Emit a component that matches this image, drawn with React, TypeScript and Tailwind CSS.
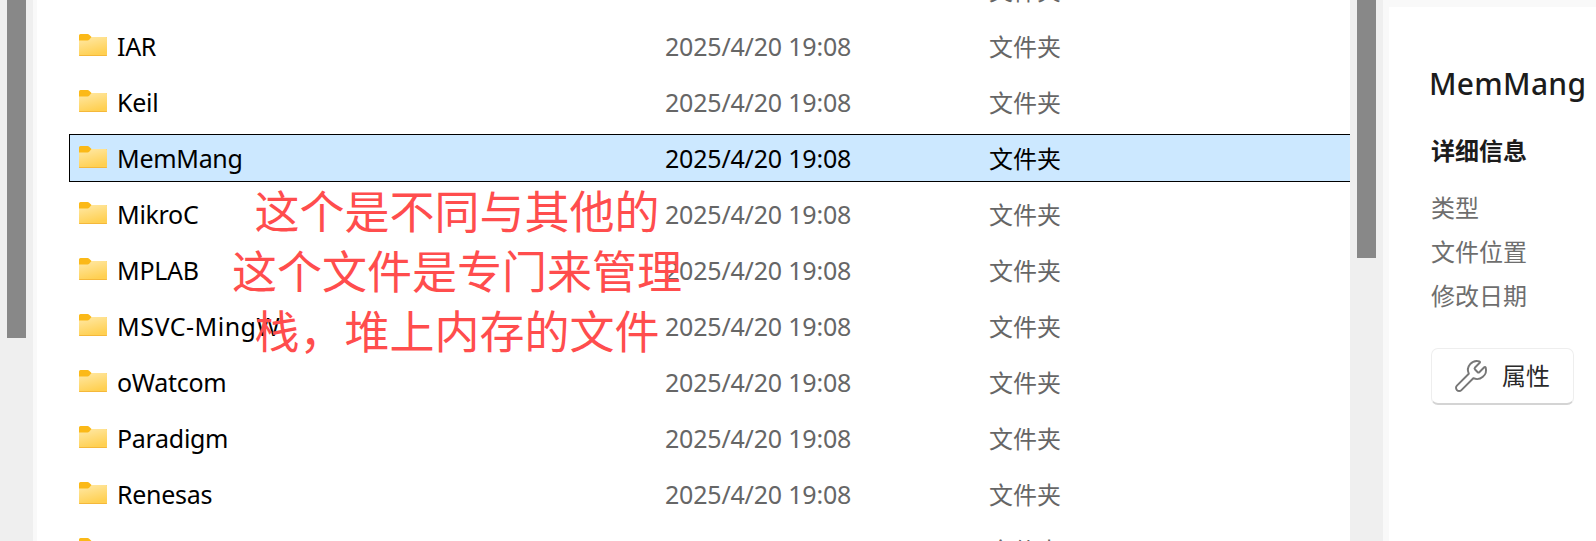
import { Wrench } from "lucide-react";

const font = { fontFamily: '"Noto Sans", "Noto Sans CJK SC", sans-serif' };

function Folder() {
  return (
    <svg width="28" height="22" viewBox="0 0 28 22" className="shrink-0 relative -top-px">
      <defs>
        <linearGradient id="fg" x1="0" y1="0" x2="0.35" y2="1">
          <stop offset="0" stopColor="#ffe9a8" />
          <stop offset="1" stopColor="#ffd052" />
        </linearGradient>
      </defs>
      <path d="M0 1.5A1.5 1.5 0 0 1 1.5 0h7c.8 0 1.2.3 1.7.8L12.5 3H27a1 1 0 0 1 1 1v6H0z" fill="#fbb918" />
      <path d="M0 6.5h8.5c.8 0 1.2-.3 1.7-.8L12.5 3H27a1 1 0 0 1 1 1v17a1 1 0 0 1-1 1H1a1 1 0 0 1-1-1z" fill="url(#fg)" />
      <path d="M0 21h28v.2a.8.8 0 0 1-.8.8H.8a.8.8 0 0 1-.8-.8z" fill="#f5b83a" />
    </svg>
  );
}

const rows = ["GCC", "IAR", "Keil", "MemMang", "MikroC", "MPLAB", "MSVC-MingW", "oWatcom", "Paradigm", "Renesas", "RVDS"];

function Row({ name }: { name: string }) {
  const selected = name === "MemMang";
  return (
    <div
      className={
        "flex items-center h-12 ml-[69px] mb-2 pl-[9px] border-y border-l " +
        (selected ? "bg-[#cce8ff] border-black" : "border-transparent text-[#666666]")
      }
    >
      <Folder />
      <span
        className={
          "w-[548px] ml-[10px] text-black text-[25px] leading-none shrink-0 " +
          (name === "MSVC-MingW" ? "tracking-[0.5px]" : "tracking-[-0.3px]")
        }
      >
        {name}
      </span>
      <span className={"w-[324px] text-[25px] leading-none shrink-0 tracking-[-0.2px] " + (selected ? "text-black" : "")}>2025/4/20 19:08</span>
      <span className={"mt-[2px] text-[24px] leading-none " + (selected ? "text-black" : "")}>文件夹</span>
    </div>
  );
}

export default function App() {
  return (
    <div className="relative flex w-[1596px] h-[541px] overflow-hidden bg-white" style={font}>
      <div className="flex w-[1350px] shrink-0">
        <div className="w-[33px] shrink-0 bg-[#efefef] pl-[7px] h-full">
          <div className="w-[19px] h-[338px] bg-[#888888]" />
        </div>
        <div className="w-1 shrink-0 bg-[#f9f9f9]" />
        <div className="flex-1 -mt-[34px] -ml-[37px] min-w-0">
          {rows.map((r) => (
            <Row key={r} name={r} />
          ))}
        </div>
      </div>
      <div className="w-[33px] shrink-0 h-full bg-[#efefef] pl-[7px]">
        <div className="w-[19px] h-[258px] bg-[#888888]" />
      </div>
      <div className="w-[6px] shrink-0 bg-[#f9f9f9]" />
      <div className="flex-1 flex flex-col">
        <div className="h-[7px] bg-[#f9f9f9]" />
        <div className="pl-[42px] pt-[58px] whitespace-nowrap">
          <div className="-ml-[2px] text-[30px] leading-[38px] font-medium text-[#1c1c1c] tracking-[0.3px]">MemMang</div>
          <div className="mt-[33px] text-[24px] leading-[30px] font-bold text-[#1c1c1c]">详细信息</div>
          <div className="mt-[20px] text-[24px] leading-[44px] text-[#6e6e6e]">
            <div>类型</div>
            <div>文件位置</div>
            <div>修改日期</div>
          </div>
          <button className="mt-[30px] flex items-center w-[143px] h-[57px] rounded-[7px] border border-[#eeeeee] border-b-2 border-b-[#d4d4d4] bg-white pl-[21px] text-[24px] text-[#2a2a2a]">
            <Wrench size={36} strokeWidth={1.3} className="text-[#777777]" />
            <span className="ml-[13px]">属性</span>
          </button>
        </div>
      </div>
      <div className="absolute left-[232px] top-[182px] w-[450px] text-center text-[45px] leading-[60px] text-[#ff4d4d]">
        这个是不同与其他的
        <br />
        这个文件是专门来管理
        <br />
        栈，堆上内存的文件
      </div>
    </div>
  );
}
